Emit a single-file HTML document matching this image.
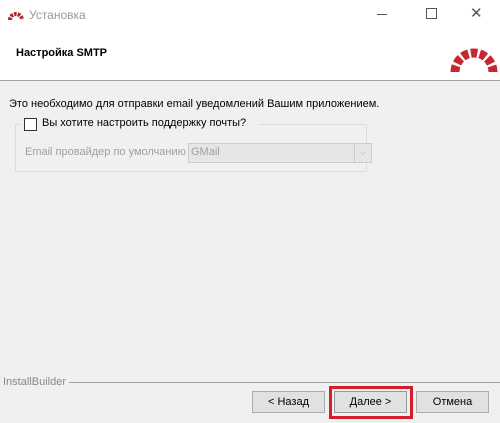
<!DOCTYPE html>
<html><head><meta charset="utf-8"><style>
body{margin:0;width:500px;height:423px;background:#f0f0f0;font-family:"Liberation Sans","DejaVu Sans",sans-serif;font-size:11px;color:#000;position:relative;overflow:hidden}
.a{position:absolute}
.btn{position:absolute;top:391px;width:71px;height:20px;border:1px solid #adadad;background:#e1e1e1;text-align:center;line-height:20px;font-size:11px}
</style></head><body>
<div class="a" style="left:0;top:0;width:500px;height:80px;background:#fff;border-bottom:1px solid #a0a0a0"></div>
<svg class="a" style="left:7px;top:8px" width="18" height="12" viewBox="0 0 18 12"><path d="M3 12 A6 6 0 0 1 15 12" fill="none" stroke="#b2202a" stroke-width="4" stroke-dasharray="2.6 1.1"/></svg>
<div class="a" style="left:29px;top:8px;color:#999;font-size:12px">Установка</div>
<div class="a" style="left:377px;top:14px;width:10px;border-top:1px solid #555"></div>
<div class="a" style="left:426px;top:8px;width:9px;height:9px;border:1px solid #555"></div>
<div class="a" style="left:470px;top:4px;font-size:15px;color:#555">✕</div>
<div class="a" style="left:16px;top:47px;font-weight:bold;font-size:11px">Настройка SMTP</div>
<svg class="a" style="left:450px;top:38px" width="48" height="34" viewBox="0 0 48 34"><path d="M5 34 A19 19 0 0 1 43 34" fill="none" stroke="#c8262f" stroke-width="9" stroke-dasharray="6.4 2.5"/></svg>
<div class="a" style="left:9px;top:98px">Это необходимо для отправки email уведомлений Вашим приложением.</div>
<div class="a" style="left:15px;top:124px;width:350px;height:46px;border:1px solid #dcdcdc"></div>
<div class="a" style="left:20px;top:116px;width:238px;height:16px;background:#f0f0f0"></div>
<div class="a" style="left:24px;top:118px;width:11px;height:11px;border:1px solid #333;background:#fff"></div>
<div class="a" style="left:42px;top:117px">Вы хотите настроить поддержку почты?</div>
<div class="a" style="left:25px;top:146px;color:#a0a0a0">Email провайдер по умолчанию</div>
<div class="a" style="left:188px;top:143px;width:182px;height:18px;border:1px solid #ccc;background:#e6e6e6"></div>
<div class="a" style="left:191px;top:146px;color:#a0a0a0">GMail</div>
<div class="a" style="left:354px;top:144px;width:16px;height:18px;border-left:1px solid #ccc;color:#bbb;font-size:10px;text-align:center;line-height:18px">⌵</div>
<div class="a" style="left:67px;top:382px;width:433px;border-top:1px solid #a0a0a0"></div>
<div class="a" style="left:0;top:376px;padding:0 3px;background:#f0f0f0;color:#888;font-size:11px">InstallBuilder</div>
<div class="btn" style="left:252px">&lt; Назад</div>
<div class="a" style="left:329px;top:386px;width:78px;height:27px;border:3px solid #d21f2b"></div>
<div class="btn" style="left:334px;border-color:#999">Далее &gt;</div>
<div class="btn" style="left:416px">Отмена</div>
</body></html>
